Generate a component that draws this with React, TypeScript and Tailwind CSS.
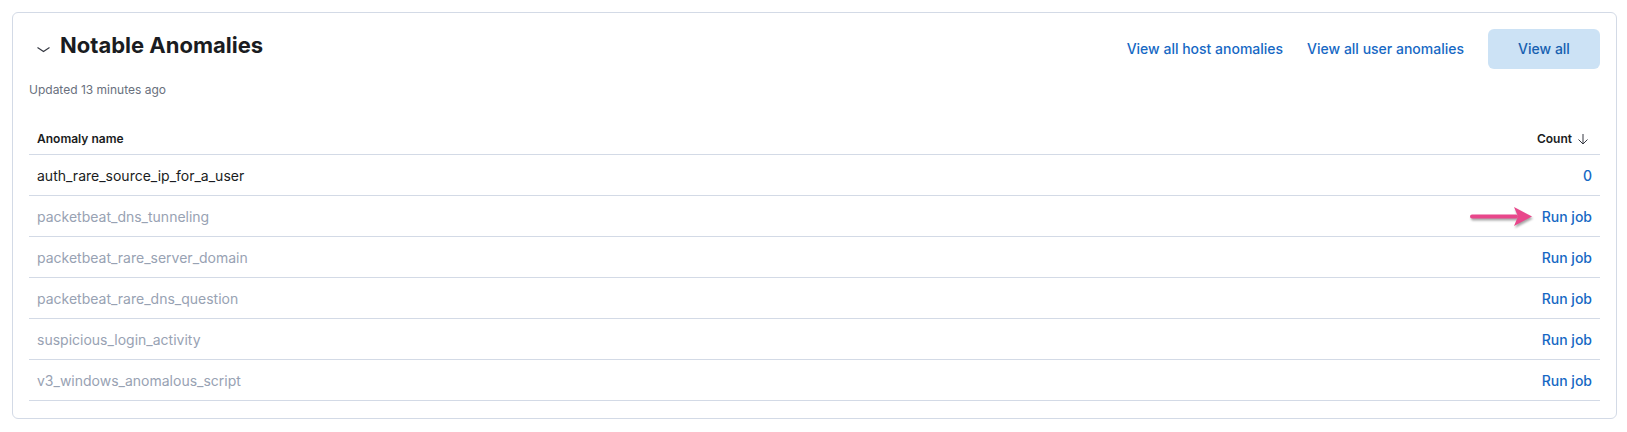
import React from "react";

const rows: { name: string; count: string; active: boolean }[] = [
  { name: "auth_rare_source_ip_for_a_user", count: "0", active: true },
  { name: "packetbeat_dns_tunneling", count: "Run job", active: false },
  { name: "packetbeat_rare_server_domain", count: "Run job", active: false },
  { name: "packetbeat_rare_dns_question", count: "Run job", active: false },
  { name: "suspicious_login_activity", count: "Run job", active: false },
  { name: "v3_windows_anomalous_script", count: "Run job", active: false },
];

function PinkArrow() {
  return (
    <svg
      className="absolute right-[calc(100%+8px)] top-1/2 -translate-y-1/2 drop-shadow-[1px_2px_1px_rgba(0,0,0,0.35)]"
      width="66"
      height="26"
      viewBox="0 0 66 26"
    >
      <rect x="2" y="10.5" width="48" height="4" rx="2" fill="#e8478b" />
      <path d="M46 3 L64 12.5 L46 22 L50 12.5 Z" fill="#e8478b" />
    </svg>
  );
}

export default function App() {
  return (
    <div className="w-[1627px] h-[432px] bg-white pl-3 pt-3 font-['Inter',sans-serif]">
      <section className="w-[1605px] border border-[#d3dae6] rounded-md px-4 pt-4 pb-[17px]">
        {/* header */}
        <div className="flex items-start justify-between">
          <div className="flex items-start">
            <button className="ml-[7px] mt-[12px] w-4 h-4 text-[#343741]">
              <svg width="16" height="16" viewBox="0 0 16 16" fill="none">
                <path d="M1.5 6.5 L7.5 10.5 L13.5 6.5" stroke="currentColor" strokeWidth="1.1" />
              </svg>
            </button>
            <h2 className="ml-[8px] text-[22px] leading-[32px] font-bold text-[#1a1c21]">
              Notable Anomalies
            </h2>
          </div>
          <div className="flex items-center gap-6 text-sm font-medium">
            <a className="text-[#1668c4]">View all host anomalies</a>
            <a className="text-[#1668c4]">View all user anomalies</a>
            <button className="w-[112px] h-10 rounded-md bg-[#cce2f5] text-[#1660b0] font-medium">
              View all
            </button>
          </div>
        </div>

        <p className="mt-[13px] text-xs leading-4 text-[#69707d]">Updated 13 minutes ago</p>

        {/* table */}
        <div className="mt-[25px]">
          <div className="flex items-center justify-between h-8 px-2 border-b border-[#d3dae6] text-xs font-semibold text-[#1a1c21]">
            <span>Anomaly name</span>
            <span className="flex items-center gap-1">
              Count
              <svg width="16" height="16" viewBox="0 0 16 16" fill="none">
                <path d="M7 3v10 M2.5 8.5 L7 13 L11.5 8.5" stroke="#343741" strokeWidth="1" />
              </svg>
            </span>
          </div>
          {rows.map((r, i) => (
            <div
              key={r.name}
              className="flex items-center justify-between h-[41px] px-2 pt-[2px] border-b border-[#d3dae6] text-sm"
            >
              <span className={r.active ? "text-[#1a1c21]" : "text-[#98a2b3]"}>{r.name}</span>
              <span className="relative font-medium text-[#1668c4]">
                {i === 1 && <PinkArrow />}
                {r.count}
              </span>
            </div>
          ))}
        </div>
      </section>
    </div>
  );
}
